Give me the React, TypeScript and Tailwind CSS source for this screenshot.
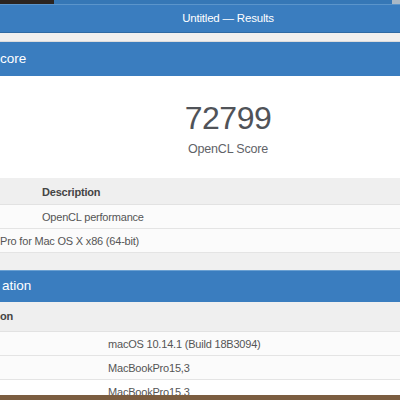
export default function App() {
  return (
    <div
      className="w-[400px] h-[400px] overflow-hidden bg-white flex flex-col"
      style={{ fontFamily: '"Liberation Sans", Arial, sans-serif' }}
    >
      {/* window chrome */}
      <div className="h-[4px] flex shrink-0">
        <div className="w-[54px] bg-[#2b2420]" />
        <div className="flex-1 bg-[#3577b6]" />
        <div className="w-[8px] bg-[#a9b8c6]" />
      </div>
      <div className="h-[29px] shrink-0 bg-[#3a7dbf] border-t border-[#5b95cb] border-b border-b-[#2f6aa3] flex items-center justify-center pl-[56px]">
        <span className="text-[11.5px] tracking-[-0.2px] text-white">Untitled — Results</span>
      </div>
      <div className="h-[9px] shrink-0 bg-[#f1f0ef] border-b border-[#dcdcdc]" />

      {/* score section */}
      <div className="h-[34px] shrink-0 bg-[#3a7dbf] flex items-center">
        <span className="text-[13.5px] text-white">core</span>
      </div>
      <div className="h-[102px] shrink-0 flex flex-col items-center pl-[56px] pt-[26px]">
        <div className="text-[32px] leading-none tracking-[-0.5px] text-[#505358]">72799</div>
        <div className="mt-[6px] text-[12.5px] tracking-[-0.2px] text-[#5f6368]">OpenCL Score</div>
      </div>

      <div className="h-[27px] shrink-0 bg-[#efefef] border-b border-[#e2e2e2] flex items-center pl-[42px] pt-[2px]">
        <span className="text-[11px] tracking-[-0.2px] font-bold text-[#444]">Description</span>
      </div>
      <Row>
        <span className="pl-[42px]">OpenCL performance</span>
      </Row>
      <Row>
        <span>Pro for Mac OS X x86 (64-bit)</span>
      </Row>
      <div className="h-[17px] shrink-0 bg-[#f0f0f0]" />

      {/* system information */}
      <div className="h-[32px] shrink-0 bg-[#3a7dbf] border-t border-[#6aa0d2] flex items-center">
        <span className="text-[13.5px] text-white pl-[2px]">ation</span>
      </div>
      <div className="h-[30px] shrink-0 bg-[#efefef] border-b border-[#e2e2e2] flex items-center">
        <span className="text-[11px] tracking-[-0.2px] font-bold text-[#444]">on</span>
      </div>
      <InfoRow value="macOS 10.14.1 (Build 18B3094)" />
      <InfoRow value="MacBookPro15,3" />
      <div className="h-[15px] shrink-0 flex items-end pl-[108px] overflow-hidden">
        <span className="text-[11px] tracking-[-0.2px] text-[#555] leading-none translate-y-[3px]">MacBookPro15,3</span>
      </div>
      <div className="flex-1 bg-[#7b5d40]" />
    </div>
  )
}

function Row({ children }: { children: React.ReactNode }) {
  return (
    <div className="h-[24px] shrink-0 bg-[#fbfbfb] border-b border-[#e4e4e4] flex items-center pt-[2px] text-[11px] tracking-[-0.2px] text-[#555]">
      {children}
    </div>
  )
}

function InfoRow({ value }: { value: string }) {
  return (
    <div className="h-[24px] shrink-0 bg-[#fbfbfb] border-b border-[#e4e4e4] flex items-center pt-[2px] pl-[108px] text-[11px] tracking-[-0.2px] text-[#555]">
      <span>{value}</span>
    </div>
  )
}
